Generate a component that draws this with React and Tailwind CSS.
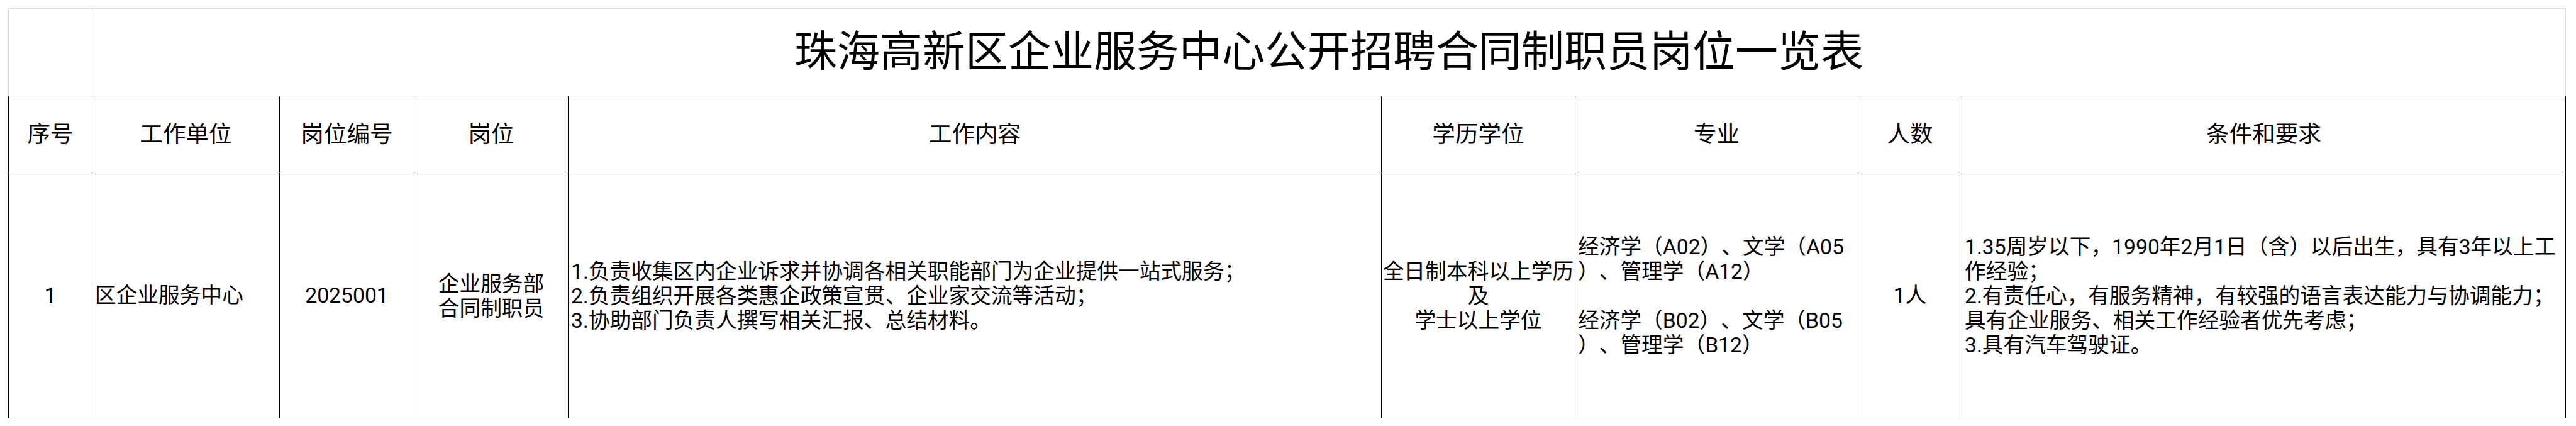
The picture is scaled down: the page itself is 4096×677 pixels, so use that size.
import React from "react";

const grid =
  "grid grid-cols-[133px_298px_214px_245px_1293px_308px_450px_165px_960px]";

const headers = ["序号", "工作单位", "岗位编号", "岗位", "工作内容", "学历学位", "专业", "人数", "条件和要求"];

function Lines({ lines }) {
  return (
    <div className="leading-[39px] whitespace-nowrap">
      {lines.map((l, i) => (
        <div key={i} className="h-[39px]">{l}</div>
      ))}
    </div>
  );
}

export default function App() {
  const cell = "border-r border-black flex items-center";

  return (
    <div className="min-h-screen bg-white pt-[13px] pl-[13px] text-black [text-spacing-trim:space-all] font-['Roboto','Noto_Sans_CJK_SC',sans-serif]">
      {/* title row */}
      <div className="flex w-fit h-[139px] border-t border-l border-[#dcdcdc]">
        <div className="w-[133px] border-r border-[#dcdcdc]" />
        <div className="w-[3933px] border-r border-[#dcdcdc] flex items-center justify-center text-[68px] leading-none">
          珠海高新区企业服务中心公开招聘合同制职员岗位一览表
        </div>
      </div>

      {/* header row */}
      <div className={`${grid} w-fit h-[124px] border-t border-l border-black text-[36.6px]`}>
        {headers.map((h) => (
          <div key={h} className={`${cell} justify-center`}>
            {h}
          </div>
        ))}
      </div>

      {/* data row */}
      <div className={`${grid} w-fit h-[389px] border-t border-b border-l border-black text-[33.7px]`}>
        <div className={`${cell} justify-center`}>1</div>
        <div className={`${cell} pl-[4px] whitespace-nowrap`}>区企业服务中心</div>
        <div className={`${cell} justify-center`}>2025001</div>
        <div className={`${cell} justify-center text-center`}>
          <Lines lines={["企业服务部", "合同制职员"]} />
        </div>
        <div className={`${cell} pl-[4px]`}>
          <Lines
            lines={[
              "1.负责收集区内企业诉求并协调各相关职能部门为企业提供一站式服务；",
              "2.负责组织开展各类惠企政策宣贯、企业家交流等活动；",
              "3.协助部门负责人撰写相关汇报、总结材料。",
            ]}
          />
        </div>
        <div className={`${cell} justify-center text-center`}>
          <Lines lines={["全日制本科以上学历", "及", "学士以上学位"]} />
        </div>
        <div className={`${cell} pl-[4px]`}>
          <Lines
            lines={[
              "经济学（A02）、文学（A05",
              "）、管理学（A12）",
              "",
              "经济学（B02）、文学（B05",
              "）、管理学（B12）",
            ]}
          />
        </div>
        <div className={`${cell} justify-center`}>1人</div>
        <div className={`${cell} pl-[4px]`}>
          <Lines
            lines={[
              "1.35周岁以下，1990年2月1日（含）以后出生，具有3年以上工",
              "作经验；",
              "2.有责任心，有服务精神，有较强的语言表达能力与协调能力；",
              "具有企业服务、相关工作经验者优先考虑；",
              "3.具有汽车驾驶证。",
            ]}
          />
        </div>
      </div>
    </div>
  );
}
